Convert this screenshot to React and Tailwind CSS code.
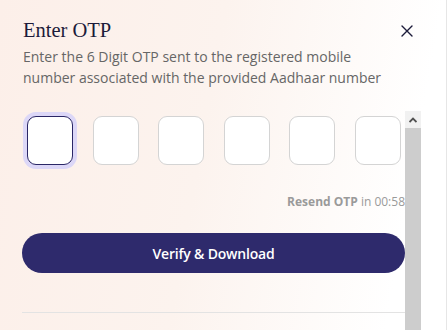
import React from "react";

const OtpBox = ({ active }) => (
  <div
    className={
      active
        ? "w-[46px] h-[49px] shrink-0 rounded-[9px] border border-[#2b2766] bg-white ring-4 ring-[#dcd7f7]"
        : "w-[46px] h-[49px] shrink-0 rounded-[9px] border border-[#d4d4d4] bg-white"
    }
  ></div>
);

export default function App() {
  return (
    <div
      className="relative w-[447px] h-[330px] overflow-hidden border-r border-[#e6e6e6] bg-[linear-gradient(100deg,#fcefe9_0%,#fcf3ee_45%,#ffffff_88%)]"
      style={{ fontFamily: '"Open Sans", "Liberation Sans", sans-serif' }}
    >
      {/* header */}
      <div className="flex items-start justify-between pl-[23px] pr-[33px] pt-[15px]">
        <h2
          className="text-[20.5px] leading-[30px] text-[#1c1b3a]"
          style={{ fontFamily: '"Liberation Serif", "DejaVu Serif", serif' }}
        >
          Enter OTP
        </h2>
        <button className="mt-[10px] w-[12px] h-[12px] flex items-center justify-center">
          <svg width="12" height="12" viewBox="0 0 12 12" fill="none">
            <path d="M1 1L11 11M11 1L1 11" stroke="#1c1b3a" strokeWidth="1.4" strokeLinecap="round" />
          </svg>
        </button>
      </div>
      <p className="pl-[23px] pr-[40px] mt-[1px] text-[14px] leading-[21px] text-[#666666]">
        Enter the 6 Digit OTP sent to the registered mobile number associated with the provided Aadhaar number
      </p>

      {/* scroll area */}
      <div className="relative mt-[23px] ml-[22px] w-[399px] h-[219px] overflow-hidden">
        <div className="w-[383px] overflow-hidden">
          <div className="flex gap-[19.6px] pl-[5px] pt-[5px] w-[420px]">
            <OtpBox active />
            <OtpBox />
            <OtpBox />
            <OtpBox />
            <OtpBox />
            <OtpBox />
          </div>
          <div className="mt-[28px] text-right text-[12px] leading-[18px] text-[#9a9a9a] pr-[0px] whitespace-nowrap">
            <span className="font-bold">Resend OTP</span> in 00:58
          </div>
          <button className="mt-[22px] w-[383px] h-[40px] rounded-full bg-[#2e2a6c] text-white text-[14px] font-semibold tracking-[-0.2px]">
            Verify &amp; Download
          </button>
          <div className="mt-[39px] h-px bg-[#e3e3e3]"></div>
        </div>

        {/* scrollbar */}
        <div className="absolute right-0 top-0 w-[16px] h-full bg-[#cdcdcd]">
          <div className="h-[17px] bg-[#f1f1f1] flex items-center justify-center">
            <svg width="8" height="6" viewBox="0 0 8 6">
              <path d="M0.5 5L4 1.5L7.5 5" fill="none" stroke="#505050" strokeWidth="1.8" />
            </svg>
          </div>
        </div>
      </div>
    </div>
  );
}
